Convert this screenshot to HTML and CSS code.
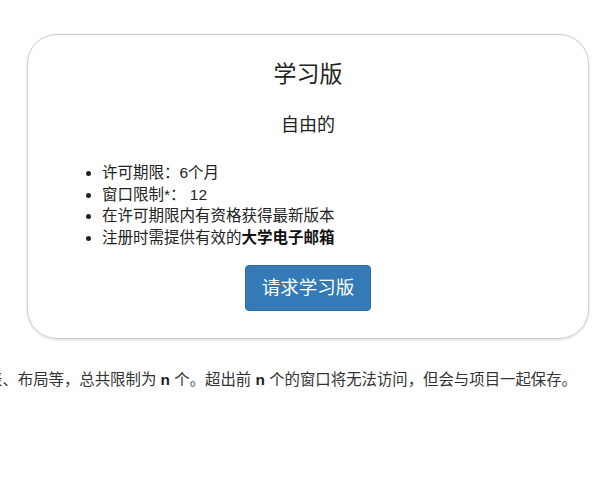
FILE: index.html
```html
<!DOCTYPE html>
<html lang="zh-CN">
<head>
<meta charset="utf-8">
<title>学习版</title>
<link rel="stylesheet" href="styles.css">
</head>
<body>
  <section class="plan-card">
    <h3 class="plan-title">学习版</h3>
    <h4 class="plan-price">自由的</h4>
    <ul class="plan-features">
      <li>许可期限：6个月</li>
      <li>窗口限制*： 12</li>
      <li>在许可期限内有资格获得最新版本</li>
      <li>注册时需提供有效的<strong>大学电子邮箱</strong></li>
    </ul>
    <div class="plan-action">
      <a class="btn-primary" href="#">请求学习版</a>
    </div>
  </section>
  <p class="footnote"><span>*窗口包括图表、布局等，总共限制为 <b>n</b> 个。超出前 <b>n</b> 个的窗口将无法访问，但会与项目一起保存。</span></p>
</body>
</html>
```
FILE: styles.css
```css
html, body {
  margin: 0;
  padding: 0;
  background: #ffffff;
}

body {
  font-family: "Liberation Sans", "Noto Sans CJK SC", sans-serif;
  color: #333333;
  overflow: hidden;
}

.plan-card {
  width: 562px;
  box-sizing: border-box;
  margin: 34px 0 0 27px;
  padding: 27px 30px 27px;
  border: 1px solid #cccccc;
  border-radius: 30px;
  box-shadow: 0 1px 3px rgba(0, 0, 0, 0.14);
  text-align: center;
}

.plan-title {
  margin: 0;
  font-size: 23px;
  line-height: 24px;
  font-weight: normal;
  color: #222222;
}

.plan-price {
  margin: 29px 0 0;
  font-size: 18px;
  line-height: 20px;
  font-weight: normal;
  color: #222222;
}

.plan-features {
  margin: 27px 0 0;
  padding: 0 0 0 44px;
  text-align: left;
  font-size: 15.5px;
  line-height: 21.5px;
  color: #222222;
}

.plan-features strong {
  font-weight: bold;
  color: #111111;
}

.plan-action {
  margin-top: 17px;
  display: flex;
  justify-content: center;
}

.btn-primary {
  display: inline-block;
  padding: 10px 16px;
  font-size: 18.5px;
  line-height: 24px;
  color: #ffffff;
  text-decoration: none;
  background: #337ab7;
  border: 1px solid #2e6da4;
  border-radius: 4px;
}

.footnote {
  margin: 31px 0 0;
  padding-right: 19px;
  display: flex;
  justify-content: flex-end;
  font-size: 15.4px;
  line-height: 20px;
  color: #333333;
}

.footnote span {
  white-space: nowrap;
}

.footnote b {
  color: #222222;
}
```
